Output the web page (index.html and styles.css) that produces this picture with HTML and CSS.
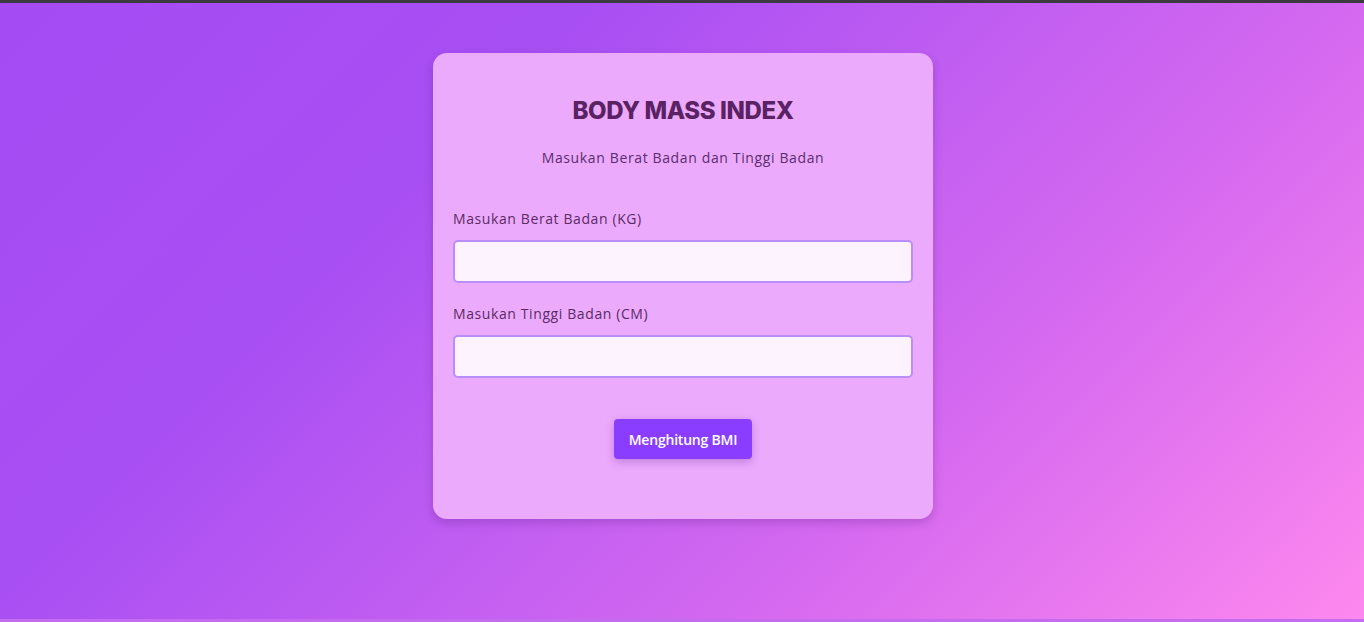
FILE: index.html
```html
<!DOCTYPE html>
<html lang="id">
<head>
<meta charset="utf-8">
<title>Body Mass Index</title>
<link rel="stylesheet" href="styles.css">
</head>
<body>
<div class="topbar"></div>
<main class="page">
  <section class="card">
    <h1 class="title">BODY MASS INDEX</h1>
    <p class="subtitle">Masukan Berat Badan dan Tinggi Badan</p>
    <form class="form">
      <label class="label" for="berat">Masukan Berat Badan (KG)</label>
      <input class="input" id="berat" type="text">
      <label class="label" for="tinggi">Masukan Tinggi Badan (CM)</label>
      <input class="input" id="tinggi" type="text">
      <div class="actions">
        <button class="btn" type="button">Menghitung BMI</button>
      </div>
    </form>
  </section>
</main>
<div class="bottombar"></div>
</body>
</html>
```

FILE: styles.css
```css
* { box-sizing: border-box; }
html, body { margin: 0; padding: 0; height: 100%; }
body {
  font-family: "Open Sans", "Noto Sans", sans-serif;
  display: flex;
  flex-direction: column;
  background: #c36cee;
}
.topbar { height: 3px; background: #3b3b3f; flex: none; }
.bottombar { height: 3px; background: #c36cee; flex: none; }
.page {
  flex: 1;
  background: linear-gradient(135deg, #a54bf4 0%, #a84ff3 30%, #d66af0 70%, #fd88ee 100%);
  display: flex;
  justify-content: center;
  align-items: flex-start;
  padding-top: 50px;
  padding-left: 2px;
}
.card {
  width: 500px;
  height: 466px;
  background: #ecaafd;
  border-radius: 14px;
  box-shadow: 0 4px 10px rgba(80, 20, 120, 0.25);
  padding: 41px 20px 0;
  display: flex;
  flex-direction: column;
}
.title {
  margin: 0;
  text-align: center;
  font-family: "Inter", sans-serif;
  font-weight: 800;
  font-size: 24px;
  line-height: 34px;
  color: #5a2163;
  letter-spacing: -0.4px;
}
.subtitle {
  margin: 20px 0 0;
  text-align: center;
  font-size: 14px;
  line-height: 20px;
  color: #5b2d6e;
  letter-spacing: 0.63px;
}
.form {
  display: flex;
  flex-direction: column;
  margin-top: 41px;
}
.label {
  font-size: 14px;
  line-height: 20px;
  color: #5b2a63;
  letter-spacing: 0.6px;
}
.input {
  margin-top: 11px;
  height: 43px;
  border: 2px solid #b98ef9;
  border-radius: 5px;
  background: #fcf3fe;
  margin-bottom: 21px;
  outline: none;
}
.actions {
  display: flex;
  justify-content: center;
  margin-top: 20px;
}
.btn {
  width: 138px;
  height: 40px;
  border: none;
  border-radius: 4px;
  background: #8b3dff;
  color: #fff;
  font-family: "Open Sans", sans-serif;
  font-weight: 600;
  font-size: 14px;
  letter-spacing: -0.2px;
  box-shadow: 0 3px 8px rgba(90, 30, 150, 0.3);
}
```
